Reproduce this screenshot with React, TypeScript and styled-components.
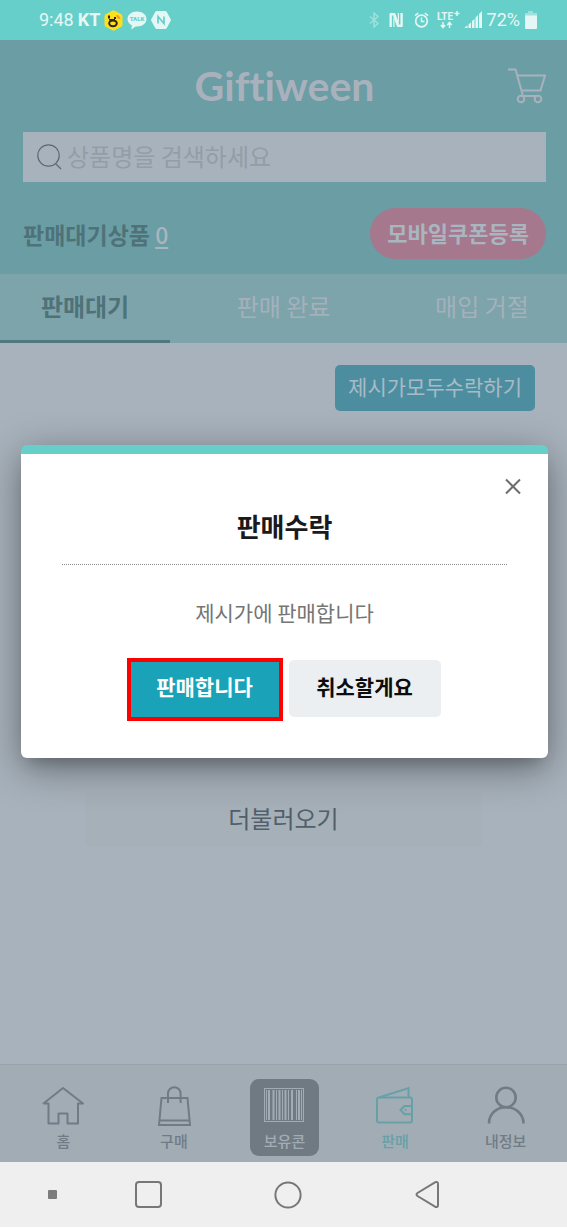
import React from "react";
import styled, { createGlobalStyle } from "styled-components";

const GlobalStyle = createGlobalStyle`
  *, *::before, *::after { box-sizing: border-box; }
  body {
    margin: 0;
    background: #ffffff;
    font-family: "Noto Sans CJK KR", "Noto Sans", sans-serif;
  }
  button, input { font: inherit; }
  button { border: 0; padding: 0; cursor: pointer; }
  a { color: inherit; text-decoration: none; }
  svg { display: block; flex: none; }
`;

const Screen = styled.div`
  position: relative;
  display: flex;
  flex-direction: column;
  min-height: 100vh;
  background: #a8b2bc;
`;

/* ---- system status bar ---- */

const StatusBar = styled.div`
  display: flex;
  justify-content: space-between;
  align-items: center;
  height: 40px;
  padding: 0 30px 0 39px;
  background: #66cfc9;
  color: #e6f8f6;
  font-family: Roboto, sans-serif;
  font-size: 18px;
  line-height: 20px;
`;

const StatusGroup = styled.div<{ $gap: number }>`
  display: flex;
  align-items: center;
  gap: ${(p) => p.$gap}px;
`;

const Carrier = styled.span`
  font-weight: 700;
`;

/* ---- app header ---- */

const Header = styled.header`
  padding: 0 21px 15px 23px;
  background: #6a9ea4;
`;

const TitleRow = styled.div`
  display: grid;
  grid-template-columns: 40px 1fr 40px;
  align-items: center;
  height: 92px;
`;

const Logo = styled.h1`
  grid-column: 2;
  margin: 0;
  color: #a9b1bd;
  font-family: Lato, sans-serif;
  font-size: 41px;
  font-weight: 700;
  font-variant-ligatures: none;
  line-height: 48px;
  text-align: center;
`;

const IconButton = styled.button`
  display: flex;
  justify-content: flex-end;
  background: none;
`;

const SearchBox = styled.form`
  display: flex;
  align-items: center;
  gap: 4px;
  height: 50px;
  padding: 0 14px;
  background: #a8b2bc;
`;

const SearchInput = styled.input`
  flex: 1;
  min-width: 0;
  height: 48px;
  padding: 0 0 4px;
  border: 0;
  outline: 0;
  background: transparent;
  color: #4d5a66;
  font-size: 24px;
  &::placeholder { color: #939da7; opacity: 1; }
`;

const SummaryRow = styled.div`
  display: flex;
  justify-content: space-between;
  align-items: center;
  margin-top: 26px;
`;

const Summary = styled.p`
  margin: 0;
  color: #4f7279;
  font-size: 23px;
  font-weight: 700;
  line-height: 32px;
`;

const Count = styled.a`
  color: #a9b5bf;
  font-weight: 500;
  text-decoration: underline;
  text-decoration-thickness: 2px;
  text-underline-offset: 3px;
`;

const PillButton = styled.button`
  height: 51px;
  padding: 0 17px 4px;
  border-radius: 26px;
  background: #a5788d;
  color: #a9b5bf;
  font-size: 22px;
  font-weight: 700;
  line-height: 32px;
`;

const Tabs = styled.div`
  display: grid;
  grid-template-columns: 3fr 4fr 3fr;
  background: #7da4ab;
`;

const Tab = styled.button<{ $active?: boolean }>`
  height: 69px;
  padding-bottom: 2px;
  border-bottom: 3px solid ${(p) => (p.$active ? "#4f777e" : "transparent")};
  background: none;
  color: ${(p) => (p.$active ? "#4f7279" : "#a4b1bb")};
  font-size: 24px;
  font-weight: ${(p) => (p.$active ? 700 : 400)};
  line-height: 32px;
`;

/* ---- list area ---- */

const Content = styled.main`
  display: flex;
  flex: 1;
  flex-direction: column;
  padding: 22px 32px;
`;

const AcceptAllButton = styled.button`
  align-self: flex-end;
  height: 46px;
  padding: 0 13px 4px;
  border-radius: 5px;
  background: #4c8ea0;
  color: #a9bac6;
  font-size: 21px;
  line-height: 32px;
`;

const OfferList = styled.ul`
  min-height: 381px;
  margin: 0;
  padding: 0;
  list-style: none;
`;

const MoreButton = styled.button`
  align-self: center;
  width: 79%;
  height: 55px;
  padding-bottom: 4px;
  border-radius: 5px;
  background: #a6b0b9;
  color: #525f6a;
  font-size: 24px;
  line-height: 32px;
`;

/* ---- bottom navigation ---- */

const BottomNav = styled.nav`
  display: grid;
  grid-template-columns: repeat(5, 1fr);
  justify-items: center;
  height: 98px;
  padding: 14px 6px 0 8px;
  border-top: 1px solid #98a2ab;
  background: #a2acb5;
`;

const NavItem = styled.a<{ $tone?: "filled" | "current" }>`
  display: flex;
  flex-direction: column;
  align-items: center;
  gap: 5px;
  width: 69px;
  height: 77px;
  padding-top: 7px;
  border-radius: 9px;
  background: ${(p) => (p.$tone === "filled" ? "#707a83" : "none")};
  color: ${(p) =>
    p.$tone === "filled" ? "#a2acb5" : p.$tone === "current" ? "#67a0a7" : "#717b85"};
  font-size: 15px;
  font-weight: 500;
  line-height: 20px;
`;

const SystemNav = styled.div`
  display: flex;
  align-items: center;
  height: 66px;
  padding-left: 48px;
  border-bottom: 1px solid #ffffff;
  background: #efefef;
`;

const SystemKey = styled.button<{ $gap?: number }>`
  margin-left: ${(p) => p.$gap ?? 0}px;
  background: none;
`;

/* ---- dialog ---- */

const Overlay = styled.div`
  position: absolute;
  inset: 40px 0 66px;
  display: flex;
  align-items: center;
  padding: 0 19px 0 21px;
`;

const Dialog = styled.section`
  display: flex;
  flex-direction: column;
  align-items: center;
  width: 100%;
  padding: 22px 41px 39px;
  border-top: 9px solid #66cfc9;
  border-radius: 6px;
  background: #ffffff;
  box-shadow: 0 11px 15px -7px rgba(0, 0, 0, 0.2), 0 10px 40px rgba(0, 0, 0, 0.4);
`;

const CloseButton = styled.button`
  align-self: flex-end;
  margin-right: -16px;
  background: none;
`;

const DialogTitle = styled.h2`
  width: 100%;
  margin: 0;
  padding: 12px 0 20px;
  border-bottom: 1px dotted #8c8c8c;
  color: #1a1a1c;
  font-size: 26px;
  font-weight: 700;
  line-height: 36px;
  text-align: center;
`;

const DialogText = styled.p`
  margin: 31px 0 32px;
  color: #757575;
  font-size: 21px;
  line-height: 32px;
`;

const DialogActions = styled.div`
  display: flex;
  align-items: flex-start;
  gap: 8px;
`;

const ActionButton = styled.button`
  width: 152px;
  height: 57px;
  padding-bottom: 4px;
  border-radius: 5px;
  background: #ebeff1;
  color: #0c0c0c;
  font-size: 21px;
  font-weight: 700;
  line-height: 32px;
`;

const PrimaryAction = styled(ActionButton)`
  height: 59px;
  padding-bottom: 6px;
  border-radius: 0;
  outline: 4px solid #fe0000;
  outline-offset: -2px;
  background: #1aa2b8;
  color: #ffffff;
`;

/* ---- icons ---- */

const line = { fill: "none", stroke: "currentColor" } as const;

const BeeIcon = () => (
  <svg width="19" height="21" viewBox="0 0 19 21">
    <path d="M8.3.7q1.2-.7 2.4 0l6.6 3.6q1.2.8 1.2 2.200v8q0 1.400-1.200 2.200l-6.600 3.600q-1.200.7-2.400 0l-6.600-3.600Q.5 15.900.5 14.500v-8q0-1.400 1.200-2.200z" fill="#fbe11d" />
    <path d="M12 5q3.500-.6 4.500 3.800-3.600.8-4.500-3.800z" fill="#f29a2e" />
    <path d="M4 5.500h2v3H4zM10 7h2v2h-2z" fill="#332514" />
    <path d="M5 9.800h6" stroke="#332514" strokeWidth="1.600" />
    <ellipse cx="9" cy="13.300" rx="3.800" ry="2.900" fill="none" stroke="#332514" strokeWidth="2" />
  </svg>
);

const TalkIcon = () => (
  <svg width="20" height="19" viewBox="0 0 20 19">
    <path d="M10 .5c5.500 0 9.500 3.200 9.500 7.500s-4 7.500-9.500 7.500l-1.300-.1L4.300 18.500l.6-4.200C2.200 13 .5 10.700.5 8 .5 3.700 4.500.5 10 .5z" fill="#e4f7f5" />
    <text x="10" y="10.300" textAnchor="middle" fontFamily="Roboto, sans-serif" fontSize="6" fontWeight="900" fill="#66cfc9">TALK</text>
  </svg>
);

const HexNIcon = () => (
  <svg width="20" height="18" viewBox="0 0 20 18">
    <path d="M6 0h8q1.200 0 1.800 1l3.800 7q.6 1 0 2l-3.800 7q-.6 1-1.800 1H6q-1.200 0-1.800-1L.4 10q-.6-1 0-2l3.800-7Q4.800 0 6 0z" fill="#e4f7f5" />
    <path d="M7 12.500v-7l6 7v-7" fill="none" stroke="#66cfc9" strokeWidth="1.700" />
  </svg>
);

const BluetoothIcon = () => (
  <svg width="15" height="16" viewBox="0 0 15 16" fill="none" stroke="#9fe0dc" strokeWidth="1.500">
    <path d="M1 4.500l8 7-4 3.500V1l4 3.500-8 7" />
  </svg>
);

const NfcIcon = () => (
  <svg width="20" height="16" viewBox="0 0 20 16" fill="none" stroke="#e4f7f5" strokeWidth="2.400" strokeLinejoin="round">
    <path d="M1.700 15V2.200H5.300L9 12.500" />
    <path d="M12.600 1V13.800H9L5.300 3.500" />
    <path d="M4.900 6v9" strokeWidth="1.200" />
    <path d="M9.400 1v9" strokeWidth="1.200" />
  </svg>
);

const AlarmIcon = () => (
  <svg width="18" height="16" viewBox="0 0 18 16" fill="none" stroke="#e4f7f5">
    <circle cx="7.500" cy="9" r="5.800" strokeWidth="1.700" />
    <path d="M7.500 5.500v4h3" strokeWidth="1.500" />
    <path d="M1 3.700l3.200-2.600M14 3.700l-3.200-2.600" strokeWidth="1.500" />
  </svg>
);

const LteIcon = () => (
  <svg width="23" height="20" viewBox="0 0 23 20">
    <text x="0" y="10" fontFamily="Roboto, sans-serif" fontSize="10" fontWeight="700" fill="#e4f7f5">LTE</text>
    <path d="M20 1v5M17.500 3.500h5M6 12v5M3.800 15L6 17.500 8.200 15M12.500 18v-5M10.300 15l2.200-2.500 2.200 2.500" fill="none" stroke="#e4f7f5" strokeWidth="1.500" />
  </svg>
);

const SignalIcon = () => (
  <svg width="17" height="18" viewBox="0 0 17 18" fill="#e4f7f5">
    <path d="M0 16l2.500-1.500V17H0zM3.500 13.500l2.500-2V17H3.500zM7 10l2.500-2v9H7zM10.500 6.500l2.500-2.500V17h-2.500zM14 3l3-3v17h-3z" />
  </svg>
);

const BatteryIcon = () => (
  <svg width="12" height="18" viewBox="0 0 12 18">
    <path d="M3 0h5v2h4v4H0V2h3z" fill="#9fe0dc" />
    <path d="M0 4.500h12V17q0 1-1 1H1q-1 0-1-1z" fill="#e4f7f5" />
  </svg>
);

const CartIcon = () => (
  <svg width="39" height="36" viewBox="0 0 39 36" fill="none" stroke="#a9b1bd" strokeWidth="2">
    <path d="M1 1.500h7.500L16 28M10.500 7.500H38l-4.500 15H14.500M15 28h16" />
    <circle cx="14" cy="31" r="3.300" />
    <circle cx="31" cy="31" r="3.300" />
  </svg>
);

const SearchIcon = () => (
  <svg width="26" height="26" viewBox="0 0 26 26" fill="none" stroke="#5d6a75" strokeWidth="1.200">
    <circle cx="11.500" cy="11.500" r="10.700" />
    <path d="M18.500 19.500l5.500 5.500" />
  </svg>
);

const CloseIcon = () => (
  <svg width="20" height="20" viewBox="0 0 20 20" stroke="#6e6e6e" strokeWidth="2">
    <path d="M3 3.500l14 14M17 3.500l-14 14" />
  </svg>
);

const HomeIcon = () => (
  <svg width="42" height="40" viewBox="0 0 42 40" {...line} strokeWidth="2" strokeLinejoin="round">
    <path d="M21 2L1.500 17.500H6.500V37.500H16.500V27.500H25.500V37.500H36V17.500h5z" />
  </svg>
);

const BagIcon = () => (
  <svg width="42" height="40" viewBox="0 0 42 40" {...line} strokeWidth="2">
    <path d="M8.500 12h26L37 39H6zM7 34.500h29.500M15 17V7.500a6.300 6.300 0 0 1 12.600 0V17" />
  </svg>
);

const BarcodeIcon = () => (
  <svg width="42" height="40" viewBox="0 0 42 40" fill="none" stroke="currentColor">
    <rect x="1.500" y="2.500" width="39" height="33" strokeWidth="1" />
    <path d="M3.500 4v30M13.500 4v30M19.500 4v30M25.500 4v30M33.500 4v30M38.500 4v30" strokeWidth="1" />
    <path d="M6 4v30M10.500 4v30M16.500 4v30M22.500 4v30M29 4v30M36 4v30" strokeWidth="2" />
  </svg>
);

const WalletIcon = () => (
  <svg width="42" height="40" viewBox="0 0 42 40" {...line} strokeWidth="2">
    <rect x="3" y="11.500" width="35" height="25" rx="2" />
    <path d="M5 11.500L34.500 2v9.500M38 20h-7.500l-4 4 4 4.300H38" />
    <circle cx="31.500" cy="24" r="1" fill="currentColor" stroke="none" />
  </svg>
);

const PersonIcon = () => (
  <svg width="42" height="40" viewBox="0 0 42 40" {...line} strokeWidth="2.600">
    <circle cx="21" cy="11.500" r="9.700" />
    <path d="M4 37.500C4 28 11.500 21.200 21 21.200S38.500 28 38.500 37.500" />
  </svg>
);

export default function App() {
  return (
    <>
      <GlobalStyle />
      <Screen>
        <StatusBar>
          <StatusGroup $gap={4}>
            <span>9:48</span>
            <Carrier>KT</Carrier>
            <BeeIcon />
            <TalkIcon />
            <HexNIcon />
          </StatusGroup>
          <StatusGroup $gap={5}>
            <BluetoothIcon />
            <NfcIcon />
            <AlarmIcon />
            <LteIcon />
            <SignalIcon />
            <span>72%</span>
            <BatteryIcon />
          </StatusGroup>
        </StatusBar>

        <Header>
          <TitleRow>
            <Logo>Giftiween</Logo>
            <IconButton type="button" aria-label="장바구니">
              <CartIcon />
            </IconButton>
          </TitleRow>
          <SearchBox role="search" onSubmit={(e) => e.preventDefault()}>
            <SearchIcon />
            <SearchInput type="text" aria-label="상품 검색" placeholder="상품명을 검색하세요" />
          </SearchBox>
          <SummaryRow>
            <Summary>
              판매대기상품 <Count href="#waiting">0</Count>
            </Summary>
            <PillButton type="button">모바일쿠폰등록</PillButton>
          </SummaryRow>
        </Header>

        <Tabs role="tablist">
          <Tab type="button" role="tab" aria-selected="true" $active>판매대기</Tab>
          <Tab type="button" role="tab" aria-selected="false">판매 완료</Tab>
          <Tab type="button" role="tab" aria-selected="false">매입 거절</Tab>
        </Tabs>

        <Content>
          <AcceptAllButton type="button">제시가모두수락하기</AcceptAllButton>
          <OfferList />
          <MoreButton type="button">더불러오기</MoreButton>
        </Content>

        <BottomNav>
          <NavItem href="#home"><HomeIcon />홈</NavItem>
          <NavItem href="#buy"><BagIcon />구매</NavItem>
          <NavItem href="#coupons" $tone="filled"><BarcodeIcon />보유콘</NavItem>
          <NavItem href="#sell" $tone="current"><WalletIcon />판매</NavItem>
          <NavItem href="#me"><PersonIcon />내정보</NavItem>
        </BottomNav>

        <SystemNav>
          <SystemKey type="button" aria-label="메뉴 고정">
            <svg width="9" height="9"><rect width="9" height="9" rx="1" fill="#7c7c7c" /></svg>
          </SystemKey>
          <SystemKey type="button" aria-label="최근 앱" $gap={78}>
            <svg width="27" height="27" fill="none" stroke="#777" strokeWidth="2">
              <rect x="1" y="1" width="25" height="25" rx="3" />
            </svg>
          </SystemKey>
          <SystemKey type="button" aria-label="홈 화면" $gap={112}>
            <svg width="28" height="28" fill="none" stroke="#777" strokeWidth="2">
              <circle cx="14" cy="14" r="12.600" />
            </svg>
          </SystemKey>
          <SystemKey type="button" aria-label="뒤로" $gap={113}>
            <svg width="24" height="27" fill="none" stroke="#777" strokeWidth="2">
              <path d="M20 1.300L2.500 12q-2 1.500 0 3L20 25.700q3 1 3-1.700V3q0-2.700-3-1.700z" />
            </svg>
          </SystemKey>
        </SystemNav>

        <Overlay>
          <Dialog role="dialog" aria-modal="true" aria-labelledby="dialog-title">
            <CloseButton type="button" aria-label="닫기">
              <CloseIcon />
            </CloseButton>
            <DialogTitle id="dialog-title">판매수락</DialogTitle>
            <DialogText>제시가에 판매합니다</DialogText>
            <DialogActions>
              <PrimaryAction type="button">판매합니다</PrimaryAction>
              <ActionButton type="button">취소할게요</ActionButton>
            </DialogActions>
          </Dialog>
        </Overlay>
      </Screen>
    </>
  );
}
